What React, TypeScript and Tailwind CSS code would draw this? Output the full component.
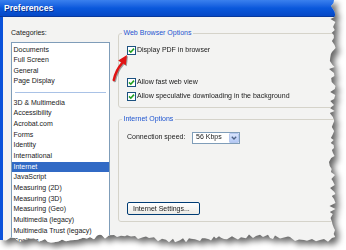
import React from 'react';

// torn right and bottom edges, built once from a fixed seed
function tornEdge() {
  let seed = 7;
  const rnd = () => {
    seed = (seed * 16807) % 2147483647;
    return (seed % 1000) / 1000;
  };
  const pts: string[] = ['0px 0px', '334px 0px'];
  for (let y = 3; y < 238; y += 2 + Math.round(rnd() * 2)) {
    pts.push(`${(329 + rnd() * 7).toFixed(1)}px ${y}px`);
  }
  for (let x = 332; x > 0; x -= 2 + Math.round(rnd() * 3)) {
    const wave = Math.sin(x / 23) * 2;
    pts.push(`${x}px ${(236 + wave + rnd() * 5).toFixed(1)}px`);
  }
  pts.push('0px 240px');
  return `polygon(${pts.join(', ')})`;
}

const categories = [
  'Documents',
  'Full Screen',
  'General',
  'Page Display',
  '-',
  '3D & Multimedia',
  'Accessibility',
  'Acrobat.com',
  'Forms',
  'Identity',
  'International',
  'Internet',
  'JavaScript',
  'Measuring (2D)',
  'Measuring (3D)',
  'Measuring (Geo)',
  'Multimedia (legacy)',
  'Multimedia Trust (legacy)',
  'Spelling',
];

function Check() {
  return (
    <span className="w-[9px] h-[9px] border border-[#1c5180] bg-white flex items-center justify-center shrink-0">
      <svg width="7" height="7" viewBox="0 0 7 7">
        <path d="M1 3.4 L2.8 5.2 L6 1.6" fill="none" stroke="#21a121" strokeWidth="1.6" />
      </svg>
    </span>
  );
}

export default function App() {
  return (
    <div
      className="w-[346px] h-[250px] bg-white overflow-hidden relative text-[7px] text-[#1a1a1a]"
      style={{ fontFamily: '"Liberation Sans", Arial, sans-serif' }}
    >
      <div className="drop-shadow-[4px_4px_3px_rgba(0,0,0,0.6)]">
        <div className="w-[340px] h-[246px] bg-[#f3f3f2] flex flex-col" style={{ clipPath: tornEdge() }}>
          {/* title bar */}
          <div className="h-[17px] shrink-0 bg-gradient-to-b from-[#3a80ee] via-[#0a58dc] to-[#0648c6] flex items-center pl-[4px] border-b border-[#08389c]">
            <span className="text-white font-bold text-[8.6px] leading-none [text-shadow:1px_1px_0_#0a2e8a]">Preferences</span>
          </div>

          {/* body */}
          <div className="flex-1 flex border-l-[3px] border-[#0a52da] pl-[8px] pt-[11px] gap-[8px]">
            <div className="w-[99px] shrink-0 flex flex-col">
              <div className="h-[10px] leading-[10px]">Categories:</div>
              <div className="mt-[4px] flex-1 border border-[#7f9db9] bg-white pt-[1.5px]">
                {categories.map((c) =>
                  c === '-' ? (
                    <div key={c} className="h-[10.67px] flex items-center px-[3px]">
                      <div className="h-[1.5px] w-full bg-[#a9c2e6]" />
                    </div>
                  ) : (
                    <div
                      key={c}
                      className={`h-[10.67px] leading-[10.67px] pl-[1.5px] whitespace-nowrap ${
                        c === 'Internet' ? 'bg-[#316ac5] text-white' : ''
                      }`}
                    >
                      {c}
                    </div>
                  )
                )}
              </div>
            </div>

            <div className="flex flex-col">
              <fieldset className="w-[220px] h-[80px] border border-[#d5d3ca] rounded-[3px]">
                <legend className="ml-[3px] px-[1.5px] h-[10px] leading-[10px] text-[#1e55d0]">Web Browser Options</legend>
                <div className="pl-[7.5px] pt-[7px] flex flex-col">
                  <label className="h-[10px] flex items-center gap-[1.5px]">
                    <Check />
                    <span>Display PDF in browser</span>
                  </label>
                  <label className="h-[10px] mt-[22.5px] flex items-center gap-[1.5px]">
                    <Check />
                    <span>Allow fast web view</span>
                  </label>
                  <label className="h-[10px] mt-[3.5px] flex items-center gap-[1.5px]">
                    <Check />
                    <span>Allow speculative downloading in the background</span>
                  </label>
                </div>
              </fieldset>

              <fieldset className="mt-[6px] w-[220px] h-[108px] border border-[#d5d3ca] rounded-[3px]">
                <legend className="ml-[3px] px-[1.5px] h-[10px] leading-[10px] text-[#1e55d0]">Internet Options</legend>
                <div className="pl-[8px] pt-[7.5px] flex flex-col">
                  <div className="h-[12px] flex items-center">
                    <span className="w-[65px]">Connection speed:</span>
                    <div className="w-[48px] h-[12px] border border-[#7f9db9] bg-white flex items-center">
                      <span className="flex-1 pl-[3px]">56 Kbps</span>
                      <span className="w-[10px] h-[10px] mr-[0.5px] rounded-[1px] bg-gradient-to-b from-[#d8e4fb] to-[#b4c9f5] border border-[#b6c8ef] flex items-center justify-center">
                        <svg width="6" height="4" viewBox="0 0 6 4">
                          <path d="M0.8 0.8 L3 3 L5.2 0.8" fill="none" stroke="#4d6185" strokeWidth="1.3" />
                        </svg>
                      </span>
                    </div>
                  </div>
                  <button className="mt-[58.5px] w-[73px] h-[12.5px] border border-[#003c74] rounded-[2px] bg-gradient-to-b from-white to-[#ecebe6] text-left pl-[5px] leading-none">
                    Internet Settings...
                  </button>
                </div>
              </fieldset>
            </div>
          </div>
        </div>
      </div>

      {/* red call-out arrow */}
      <svg className="absolute left-0 top-0" width="346" height="250" viewBox="0 0 346 250">
        <g className="drop-shadow-[1px_1px_0.5px_rgba(0,0,0,0.35)]">
          <path d="M113.8 80 Q116 70 121.8 63.5" fill="none" stroke="#e11414" strokeWidth="2.6" strokeLinecap="round" />
          <path d="M127 55 L118.2 60.6 L125.8 65.2 Z" fill="#e11414" />
        </g>
      </svg>
    </div>
  );
}
